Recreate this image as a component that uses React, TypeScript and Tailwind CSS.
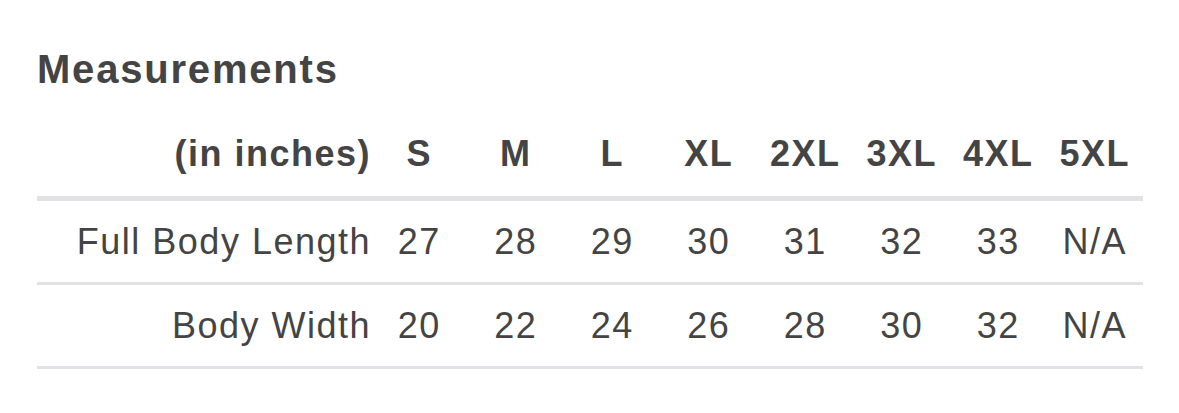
import React from "react"

const SIZES = ["S", "M", "L", "XL", "2XL", "3XL", "4XL", "5XL"]

const ROWS = [
    { label: "Full Body Length", values: ["27", "28", "29", "30", "31", "32", "33", "N/A"] },
    { label: "Body Width", values: ["20", "22", "24", "26", "28", "30", "32", "N/A"] },
]

export default function App() {
    return (
        <div
            className="w-[1179px] h-[413px] bg-white text-[#444444] pl-[37px] pt-[49px]"
            style={{ fontFamily: '"Liberation Sans", Arial, Helvetica, sans-serif' }}
        >
            {/* Title */}
            <h2 className="text-[40px] leading-[40px] font-bold tracking-[1.8px]">Measurements</h2>

            <div className="w-[1106px] mt-[23px]">
                {/* Header */}
                <div className="grid grid-cols-[334px_repeat(8,1fr)] items-center h-[89px] border-b-[5px] border-[#e2e1e6] text-[36px] font-bold tracking-[1.5px]">
                    <div className="text-right">(in inches)</div>
                    {SIZES.map((s) => (
                        <div key={s} className="text-center">{s}</div>
                    ))}
                </div>

                {/* Rows */}
                {ROWS.map((row) => (
                    <div
                        key={row.label}
                        className="grid grid-cols-[334px_repeat(8,1fr)] items-center h-[84px] border-b-[3px] border-[#e2e1e6] text-[36px] tracking-[1.5px]"
                    >
                        <div className="text-right">{row.label}</div>
                        {row.values.map((v, i) => (
                            <div key={i} className="text-center">{v}</div>
                        ))}
                    </div>
                ))}
            </div>
        </div>
    )
}
